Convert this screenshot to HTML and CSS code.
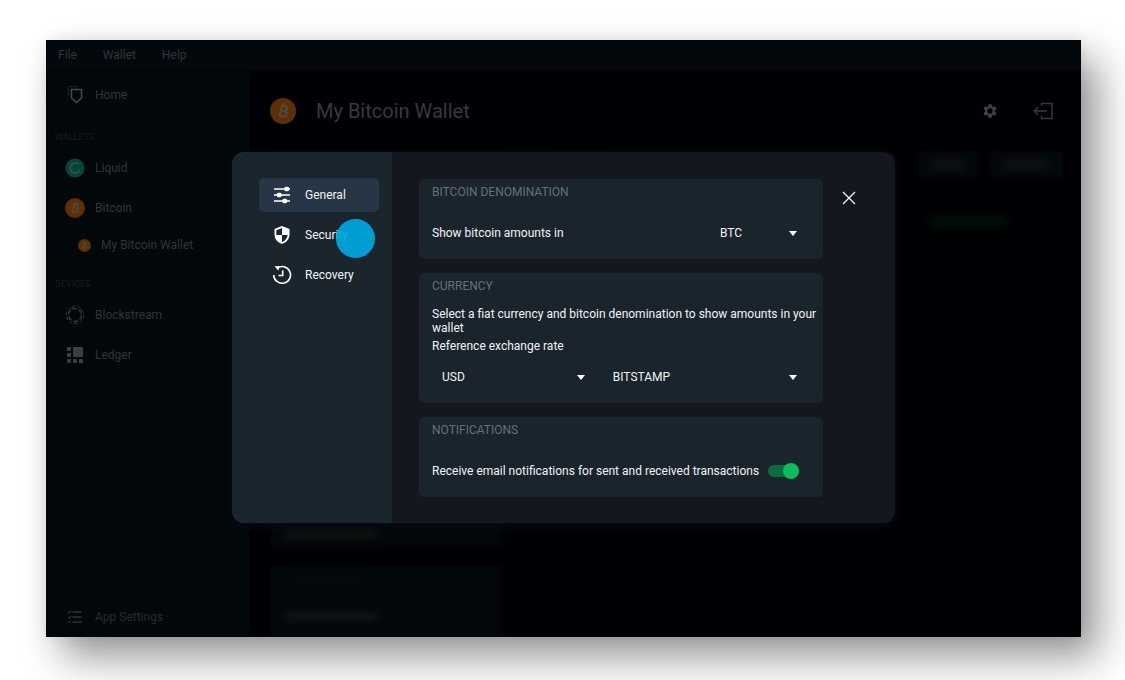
FILE: index.html
```html
<!DOCTYPE html>
<html lang="en">
<head>
    <meta charset="UTF-8">
    <meta name="viewport" content="width=device-width, initial-scale=1.0">
    <title>My Bitcoin Wallet</title>
    <link rel="stylesheet" href="styles.css">
</head>
<body>
    <!-- shared bitcoin coin -->
    <svg class="symbols" aria-hidden="true">
        <symbol id="coin" viewBox="0 0 24 24">
            <circle cx="12" cy="12" r="12" fill="#5e2f04"/>
            <g transform="rotate(14 12 12)" fill="none" stroke="#4f4740" stroke-width="1.9">
                <path d="M9.3 7.3h3.6a2.2 2.2 0 0 1 0 4.5H9.6M9.6 11.8h3.9a2.4 2.4 0 0 1 0 4.9H8.6M9.8 7v10"/>
                <path d="M10.7 5v2.4M13.1 5v2.4M10.7 16.8V19M13.1 16.8V19" stroke-width="1.3"/>
            </g>
        </symbol>
    </svg>

    <div class="window">
        <div class="menubar">
            <button>File</button>
            <button>Wallet</button>
            <button>Help</button>
        </div>

        <div class="body">
            <nav class="sidebar">
                <a href="#" class="item">
                    <svg width="20" height="20" viewBox="0 0 20 20" fill="none">
                        <path d="M3.500 11V1.500H13" stroke="#062a24" stroke-width="1"/>
                        <path d="M6.500 4.500h10v8.500l-5 4.500-5-4.500z" stroke="#46494b" stroke-width="1.500"/>
                    </svg>
                    Home
                </a>
                <h2>WALLETS</h2>
                <a href="#" class="item">
                    <svg width="20" height="20" viewBox="0 0 20 20">
                        <circle cx="10" cy="10" r="9.500" fill="#0a4438"/>
                        <path d="M13.500 6.200A5 5 0 1 0 10 15c2.800 0 4-1.600 4.200-3" fill="none" stroke="#2a5a50" stroke-width="1.600"/>
                        <path d="M9 9.500c2-2 4-.5 5.500-2" fill="none" stroke="#093d34" stroke-width="1.500"/>
                    </svg>
                    Liquid
                </a>
                <a href="#" class="item">
                    <svg width="20" height="20"><use href="#coin"/></svg>
                    Bitcoin
                </a>
                <a href="#" class="item sub">
                    <svg width="13" height="13"><use href="#coin"/></svg>
                    My Bitcoin Wallet
                </a>
                <h2>DEVICES</h2>
                <a href="#" class="item">
                    <svg width="20" height="20" viewBox="0 0 20 20" fill="none" stroke="#303335">
                        <circle cx="10" cy="10" r="6.500" stroke-width="1.500" stroke-dasharray="5 1.800"/>
                        <circle cx="10" cy="10" r="8.800" stroke-dasharray="3.500 2"/>
                        <path d="M6 3.500l3-1.800M14.500 4l3 2.500M16.500 9.500v4M12.500 16l-3 2.500M5 15l-3-2.500M3.500 9l1-4"/>
                    </svg>
                    Blockstream
                </a>
                <a href="#" class="item">
                    <svg width="20" height="20" viewBox="0 0 20 20" fill="#3c3f42">
                        <rect x="8" y="2" width="10" height="10" rx="1"/>
                        <rect x="2" y="2" width="4" height="4" rx="1"/>
                        <rect x="2" y="8" width="4" height="4" rx="1"/>
                        <rect x="2" y="14" width="4" height="4" rx="1"/>
                        <rect x="8" y="14" width="4" height="4" rx="1"/>
                        <rect x="14" y="14" width="4" height="4" rx="1"/>
                    </svg>
                    Ledger
                </a>
                <a href="#" class="item bottom">
                    <svg width="20" height="20" viewBox="0 0 20 20" fill="none" stroke="#303335" stroke-width="1.600">
                        <path d="M7.500 5h9M7.500 10h9M7.500 15h9M3.500 15h1.800"/>
                        <path d="M3 5l1 1 2-2M3 10l1 1 2-2" stroke-width="1.200"/>
                    </svg>
                    App Settings
                </a>
            </nav>

            <main class="wallet">
                <header>
                    <svg width="26" height="26"><use href="#coin"/></svg>
                    <h1>My Bitcoin Wallet</h1>
                    <button aria-label="Settings">
                        <svg width="16" height="16" viewBox="0 0 24 24" fill="#414143">
                            <path d="M19.430 12.980c.04-.32.07-.64.07-.98s-.03-.66-.07-.98l2.110-1.650c.19-.15.24-.42.12-.64l-2-3.460c-.12-.22-.39-.3-.61-.22l-2.490 1c-.52-.4-1.080-.73-1.690-.98l-.38-2.650A.49.49 0 0 0 14 2h-4c-.25 0-.46.18-.49.42l-.38 2.650c-.61.25-1.170.59-1.690.98l-2.490-1c-.23-.09-.49 0-.61.22l-2 3.460c-.13.22-.07.49.12.64l2.110 1.650c-.04.32-.07.65-.07.98s.03.66.07.98l-2.110 1.650c-.19.15-.24.42-.12.64l2 3.460c.12.22.39.3.61.22l2.490-1c.52.4 1.080.73 1.690.98l.38 2.650c.03.24.24.42.49.42h4c.25 0 .46-.18.49-.42l.38-2.650c.61-.25 1.170-.59 1.690-.98l2.490 1c.23.09.49 0 .61-.22l2-3.460c.12-.22.07-.49-.12-.64zM12 16a4 4 0 1 1 0-8 4 4 0 0 1 0 8z"/>
                        </svg>
                    </button>
                    <button aria-label="Log out">
                        <svg width="20" height="18" viewBox="0 0 20 18" fill="none" stroke="#38383a" stroke-width="1.400">
                            <path d="M8.500 4V1.500h10.500v15h-10.500V14"/>
                            <path d="M14 9H1.500M5 5L1.200 9l3.800 4"/>
                        </svg>
                    </button>
                </header>
                <div class="content">
                    <div class="accounts">
                        <div class="account tall"><span class="smudge"></span></div>
                        <div class="account"><span class="smudge small"></span><span class="smudge"></span></div>
                    </div>
                    <div class="asset"></div>
                    <div class="actions">
                        <div class="buttons">
                            <div class="action"><span class="smudge"></span></div>
                            <div class="action"><span class="smudge"></span></div>
                        </div>
                        <div class="amount"></div>
                    </div>
                </div>
            </main>
        </div>

        <div class="overlay">
            <section class="dialog" role="dialog" aria-label="Wallet settings">
                <div class="tabs">
                    <button class="tab active">
                        <svg width="20" height="20" viewBox="0 0 20 20" stroke="#fff" stroke-width="1.500" fill="#fff">
                            <path d="M2 4h16M2 10h16M2 16h16"/>
                            <rect x="13" y="2.500" width="3.500" height="3" rx="1"/>
                            <rect x="5.500" y="8.500" width="3.500" height="3" rx="1"/>
                            <rect x="11" y="14.500" width="3.500" height="3" rx="1"/>
                        </svg>
                        General
                    </button>
                    <button class="tab">
                        <svg width="20" height="20" viewBox="0 0 20 20">
                            <path d="M10 1l7.500 3v5c0 4.800-3 8.500-7.500 10-4.500-1.500-7.500-5.200-7.500-10V4z" fill="#fff"/>
                            <path d="M10 3v7H4.300V5.200zM10 10h5.700c-.4 3.200-2.500 5.900-5.700 7.100z" fill="#1b252e"/>
                        </svg>
                        Security
                        <span class="pointer"></span>
                    </button>
                    <button class="tab">
                        <svg width="20" height="20" viewBox="0 0 20 20" fill="none" stroke="#fff" stroke-width="1.600">
                            <path d="M5 3.200A8.400 8.400 0 1 1 1.700 10"/>
                            <path d="M10.700 5.500v5H6.500"/>
                            <path d="M2.500 1.200l4.800-.2-.8 4.700z" fill="#fff" stroke="none"/>
                        </svg>
                        Recovery
                    </button>
                </div>

                <div class="panel">
                    <div class="cards">
                        <div class="card">
                            <h3>BITCOIN DENOMINATION</h3>
                            <div class="row">
                                <label for="unit">Show bitcoin amounts in</label>
                                <div class="select unit">
                                    <select id="unit"><option>BTC</option></select>
                                    <svg width="8" height="5" viewBox="0 0 8 5"><path d="M0 0h8L4 5z" fill="#fff"/></svg>
                                </div>
                            </div>
                        </div>

                        <div class="card">
                            <h3>CURRENCY</h3>
                            <p>Select a fiat currency and bitcoin denomination to show amounts in your wallet</p>
                            <p>Reference exchange rate</p>
                            <div class="selects">
                                <div class="select">
                                    <select aria-label="Currency"><option>USD</option></select>
                                    <svg width="8" height="5" viewBox="0 0 8 5"><path d="M0 0h8L4 5z" fill="#fff"/></svg>
                                </div>
                                <div class="select">
                                    <select aria-label="Exchange"><option>BITSTAMP</option></select>
                                    <svg width="8" height="5" viewBox="0 0 8 5"><path d="M0 0h8L4 5z" fill="#fff"/></svg>
                                </div>
                            </div>
                        </div>

                        <div class="card">
                            <h3>NOTIFICATIONS</h3>
                            <div class="row">
                                <label for="notify">Receive email notifications for sent and received transactions</label>
                                <input type="checkbox" class="switch" id="notify" checked>
                            </div>
                        </div>
                    </div>
                    <button class="close" aria-label="Close">
                        <svg width="14" height="14" viewBox="0 0 14 14"><path d="M1 1l12 12M13 1L1 13" stroke="#fff" stroke-width="1.200"/></svg>
                    </button>
                </div>
            </section>
        </div>
    </div>
</body>
</html>
```

FILE: styles.css
```css
* {
    box-sizing: border-box;
}

body {
    display: flex;
    min-height: 100vh;
    margin: 0;
    padding: 40px 44px 43px 46px;
    background-color: #fff;
    font-family: Roboto, sans-serif;
    font-size: 12px;
    line-height: 14px;
}

h1, h2, h3, p {
    margin: 0;
    font-weight: normal;
}

a {
    color: inherit;
    text-decoration: none;
}

button, select {
    padding: 0;
    border: none;
    background: none;
    color: inherit;
    font: inherit;
    cursor: pointer;
}

svg {
    display: block;
    flex-shrink: 0;
}

.symbols {
    position: absolute;
    width: 0;
    height: 0;
}

.window {
    position: relative;
    display: flex;
    flex-direction: column;
    flex: 1;
    background-color: #000004;
    color: #323538;
    box-shadow: 17px 20px 38px rgba(0, 0, 0, 0.42), 0 0 14px rgba(0, 0, 0, 0.08);
}

/* top menu */
.menubar {
    display: flex;
    gap: 26px;
    height: 31px;
    padding: 0 12px;
    background-color: #02080b;
    border-bottom: 1px solid #000204;
}

.body {
    display: flex;
    flex: 1;
}

/* left navigation */
.sidebar {
    display: flex;
    flex-direction: column;
    width: 203px;
    padding-top: 4px;
    background-color: #02070a;
}

.sidebar h2 {
    margin: 15px 0 4px;
    padding-left: 9px;
    font-size: 9px;
    color: #181b1d;
}

.item {
    display: flex;
    align-items: center;
    gap: 10px;
    height: 40px;
    padding-left: 19px;
}

.item.sub {
    height: 34px;
    padding-left: 32px;
}

.item.bottom {
    margin-top: auto;
    color: #282a2d;
}

/* wallet behind the dialog */
.wallet {
    display: flex;
    flex-direction: column;
    flex: 1;
    padding: 0 18px 0 21px;
}

.wallet header {
    display: flex;
    align-items: center;
    height: 80px;
    padding-right: 10px;
}

.wallet h1 {
    flex: 1;
    padding-left: 20px;
    font-size: 20px;
    line-height: 24px;
    color: #39393b;
}

.wallet header button + button {
    margin-left: 35px;
}

.content {
    display: flex;
    flex: 1;
    overflow: hidden;
}

.accounts {
    display: flex;
    flex-direction: column;
    gap: 18px;
    width: 233px;
}

.account {
    display: flex;
    flex-direction: column;
    justify-content: space-between;
    height: 71px;
    padding: 12px 14px 16px;
    background-color: #020709;
    filter: blur(2px);
}

.account.tall {
    flex: 1;
    justify-content: flex-end;
    padding-bottom: 10px;
}

.smudge {
    width: 94px;
    height: 9px;
    background-color: #121214;
    filter: blur(3px);
}

.smudge.small {
    width: 68px;
    height: 7px;
    margin-left: 10px;
    background-color: #0a090d;
}

.asset {
    width: 60px;
    height: 8px;
    margin-left: 48px;
    background-color: #030f11;
    filter: blur(4px);
}

.actions {
    margin-left: auto;
}

.buttons {
    display: flex;
    gap: 12px;
}

.action {
    display: flex;
    align-items: center;
    justify-content: center;
    width: 58px;
    height: 26px;
    background-color: #03080d;
    filter: blur(2px);
}

.action .smudge {
    width: 30px;
}

.action + .action {
    width: 74px;
}

.action + .action .smudge {
    width: 42px;
}

.amount {
    width: 76px;
    height: 8px;
    margin: 40px 0 0 12px;
    background-color: #011409;
    filter: blur(4px);
}

/* settings dialog */
.overlay {
    position: absolute;
    inset: 0;
    display: flex;
    align-items: center;
    justify-content: center;
    padding-bottom: 2px;
}

.dialog {
    display: flex;
    width: 663px;
    border-radius: 12px;
    overflow: hidden;
    background-color: #15171f;
    color: #f2f3f4;
    box-shadow: 0 2px 10px #0a0e14;
}

.tabs {
    display: flex;
    flex-direction: column;
    gap: 6px;
    width: 160px;
    padding: 26px 13px 26px 27px;
    background-color: #1b252e;
}

.tab {
    position: relative;
    display: flex;
    align-items: center;
    gap: 13px;
    height: 34px;
    padding-left: 13px;
    border-radius: 5px;
}

.tab.active {
    background-color: #263646;
}

/* touch marker over the tab */
.pointer {
    position: absolute;
    top: 1px;
    right: 4px;
    width: 39px;
    height: 39px;
    border-radius: 50%;
    background-color: rgba(0, 168, 224, 0.93);
}

.panel {
    display: flex;
    align-items: flex-start;
    flex: 1;
    padding: 27px 39px 26px 27px;
}

.cards {
    display: flex;
    flex-direction: column;
    flex: 1;
    gap: 14px;
}

.card {
    padding: 6px 3px 6px 13px;
    border-radius: 5px;
    background-color: #19242d;
}

.card h3 {
    margin-bottom: 14px;
    font-size: 12px;
    color: #65707a;
}

.card p {
    margin-bottom: 4px;
}

.row {
    display: flex;
    align-items: center;
    justify-content: space-between;
    height: 40px;
    padding-right: 10px;
}

.selects {
    display: grid;
    grid-template-columns: 4fr 5fr;
    gap: 5px;
    padding-right: 10px;
}

.select {
    position: relative;
    display: flex;
    align-items: center;
}

.select.unit {
    width: 100px;
}

.select select {
    width: 100%;
    height: 40px;
    padding-left: 10px;
    appearance: none;
}

.select option {
    color: #000;
}

.select svg {
    position: absolute;
    right: 13px;
    pointer-events: none;
}

.switch {
    position: relative;
    width: 27px;
    height: 12px;
    margin: 0 15px 0 0;
    border-radius: 6px;
    background-color: #0d6b3d;
    appearance: none;
    cursor: pointer;
}

.switch::after {
    content: "";
    position: absolute;
    top: -2px;
    left: -4px;
    width: 16px;
    height: 16px;
    border-radius: 50%;
    background-color: #8a939b;
}

.switch:checked::after {
    left: 15px;
    background-color: #0abc5c;
}

.close {
    margin: 12px 0 0 19px;
}
```
